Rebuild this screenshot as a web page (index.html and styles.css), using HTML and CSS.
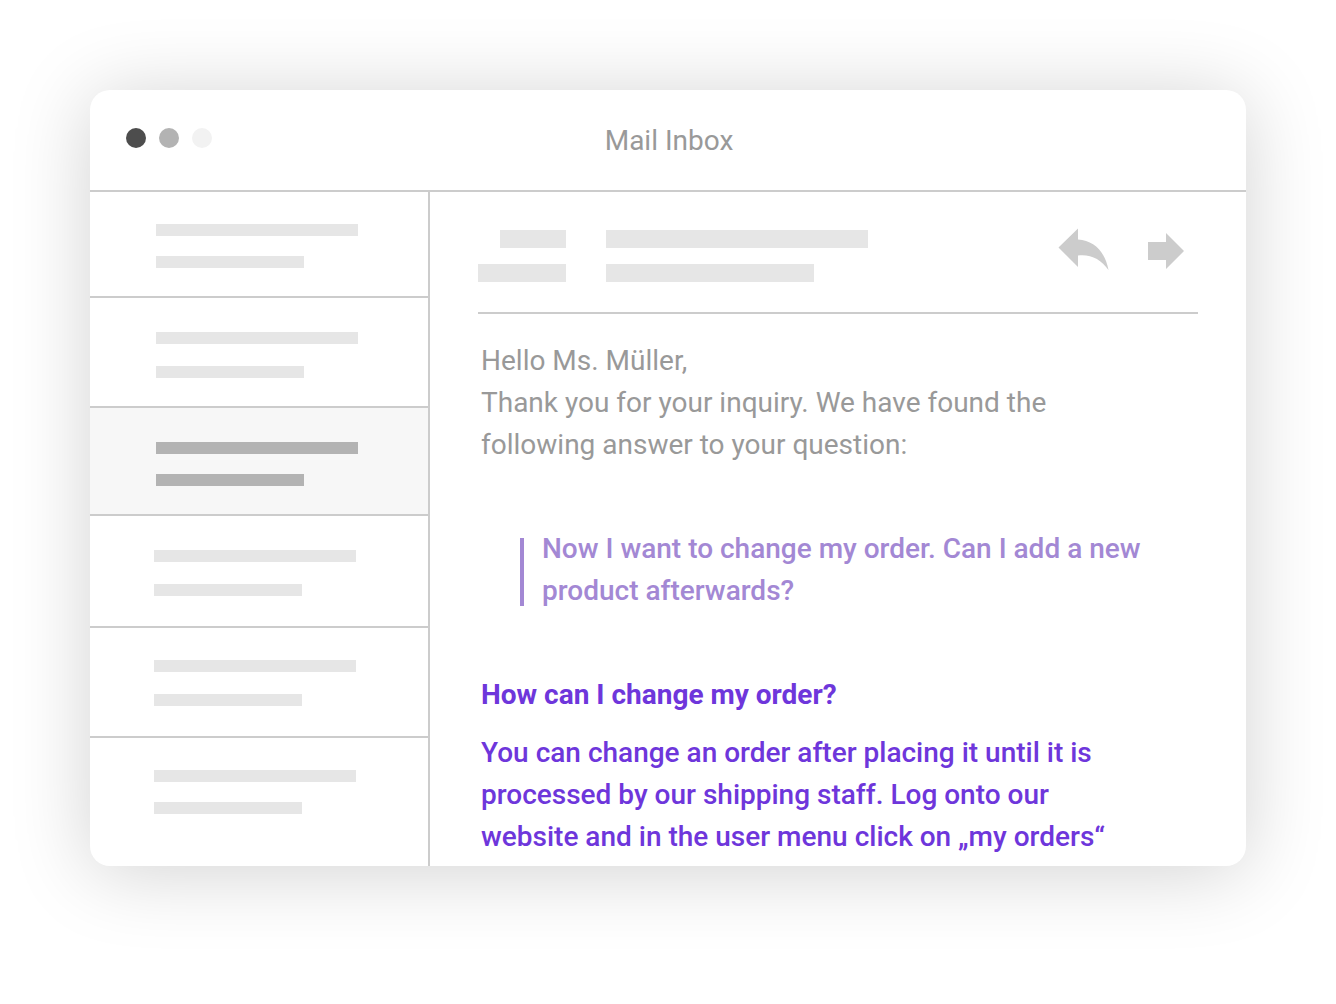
FILE: index.html
```
<!DOCTYPE html>
<html lang="en">
<head>
    <meta charset="UTF-8">
    <meta name="viewport" content="width=device-width, initial-scale=1.0">
    <title>Mail Inbox</title>
    <link rel="stylesheet" href="styles.css">
</head>
<body>
    <div class="window">
        <header class="titlebar">
            <div class="dots">
                <span class="dot dark"></span>
                <span class="dot mid"></span>
                <span class="dot light"></span>
            </div>
            <h1>Mail Inbox</h1>
        </header>

        <div class="content">
            <ul class="mail-list">
                <li class="mail"><span class="bar"></span><span class="bar short"></span></li>
                <li class="mail wide"><span class="bar"></span><span class="bar short"></span></li>
                <li class="mail selected"><span class="bar"></span><span class="bar short"></span></li>
                <li class="mail older wide"><span class="bar"></span><span class="bar short"></span></li>
                <li class="mail older wide"><span class="bar"></span><span class="bar short"></span></li>
                <li class="mail older"><span class="bar"></span><span class="bar short"></span></li>
            </ul>

            <main class="message">
                <div class="message-header">
                    <div class="labels">
                        <span class="field from"></span>
                        <span class="field subject"></span>
                    </div>
                    <div class="values">
                        <span class="field from-value"></span>
                        <span class="field subject-value"></span>
                    </div>
                    <div class="actions">
                        <button type="button" aria-label="Reply">
                            <svg width="52" height="42" viewBox="0 0 52 42">
                                <path d="M0.5 18.5 L20 -0.5 V10.5 C36 11.5 47 22.5 50.5 41 C43 30.5 33 25 20 26.5 V38 Z"/>
                            </svg>
                        </button>
                        <button type="button" aria-label="Forward">
                            <svg width="36" height="38" viewBox="0 0 36 38">
                                <path d="M0 11 H18 V2 L36 20 L18 38 V29 H0 Z"/>
                            </svg>
                        </button>
                    </div>
                </div>

                <div class="message-body">
                    <p>Hello Ms. Müller,<br>Thank you for your inquiry. We have found the<br>following answer to your question:</p>
                    <blockquote>Now I want to change my order. Can I add a new<br>product afterwards?</blockquote>
                    <h2>How can I change my order?</h2>
                    <p class="answer">You can change an order after placing it until it is<br>processed by our shipping staff. Log onto our<br>website and in the user menu click on „my orders“</p>
                </div>
            </main>
        </div>
    </div>
</body>
</html>
```

FILE: styles.css
```
* {
    box-sizing: border-box;
}
body {
    margin: 0;
    padding: 90px 90px 138px;
    background: #fff;
    font-family: Roboto, sans-serif;
    font-size: 28px;
    line-height: 42px;
    color: #999;
}
h1, h2, p, ul, blockquote {
    margin: 0;
    padding: 0;
    font-size: 28px;
}
.window {
    background: #fff;
    border-radius: 20px;
    box-shadow: 0 6px 80px rgba(0, 0, 0, 0.18);
    overflow: hidden;
}

/* title bar */
.titlebar {
    display: grid;
    grid-template-columns: 1fr auto 1fr;
    align-items: center;
    height: 102px;
    padding: 2px 34px 0 36px;
    border-bottom: 2px solid #ccc;
}
.titlebar h1 {
    font-weight: 400;
}
.dots {
    display: flex;
    gap: 13px;
    padding-bottom: 6px;
}
.dot {
    width: 20px;
    height: 20px;
    border-radius: 50%;
}
.dark { background: #4d4d4d; }
.mid { background: #b3b3b3; }
.light { background: #f2f2f2; }

.content {
    display: flex;
}

/* mail list */
.mail-list {
    flex: 0 0 340px;
    border-right: 2px solid #ccc;
    list-style: none;
}
.mail {
    display: flex;
    flex-direction: column;
    gap: 20px;
    padding: 34px 66px 28px;
    border-bottom: 2px solid #ccc;
}
.mail:first-child {
    padding-top: 32px;
}
.mail:last-child {
    border-bottom: none;
}
.mail.wide {
    gap: 22px;
}
.mail.older {
    padding: 32px 64px 30px;
}
.mail.selected + .mail {
    padding-top: 34px;
}
.selected {
    background: #f7f7f7;
}
.bar {
    width: 202px;
    height: 12px;
    background: #e6e6e6;
}
.short {
    width: 148px;
}
.selected .bar {
    background: #b3b3b3;
}

/* open message */
.message {
    flex: 1;
    padding: 36px 48px 8px;
}
.message-header {
    display: flex;
    gap: 40px;
    padding: 2px 14px 30px 0;
    border-bottom: 2px solid #ccc;
}
.labels, .values {
    display: flex;
    flex-direction: column;
    gap: 16px;
}
.labels {
    align-items: flex-end;
}
.field {
    height: 18px;
    background: #e6e6e6;
}
.from { width: 66px; }
.subject { width: 88px; }
.from-value { width: 262px; }
.subject-value { width: 208px; }
.actions {
    display: flex;
    align-items: center;
    gap: 38px;
    height: 42px;
    margin: -1px 0 0 auto;
}
.actions button {
    display: flex;
    padding: 0;
    border: none;
    background: none;
    cursor: pointer;
}
.actions svg {
    fill: #ccc;
    overflow: visible;
}
.message-body {
    padding: 26px 0 0 3px;
}
blockquote {
    position: relative;
    margin: 62px 0 62px 39px;
    padding-left: 22px;
    font-weight: 500;
    color: #a388d4;
}
blockquote::before {
    content: "";
    position: absolute;
    left: 0;
    top: 10px;
    bottom: 6px;
    width: 4px;
    background: #a388d4;
}
h2 {
    margin-bottom: 16px;
    font-weight: 700;
    color: #6e36db;
}
.answer {
    font-weight: 500;
    color: #6e36db;
}
```
